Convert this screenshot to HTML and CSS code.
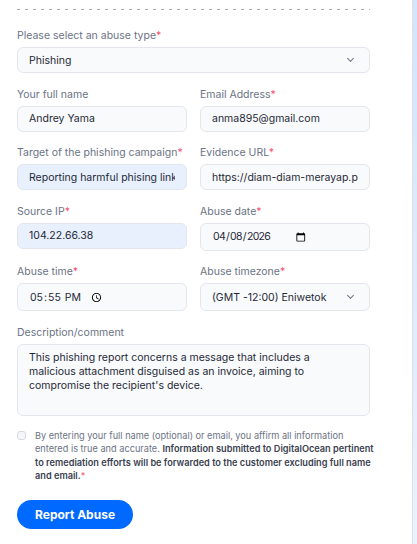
FILE: index.html
```html
<!DOCTYPE html>
<html lang="en">
<head>
  <meta charset="UTF-8" />
  <meta name="viewport" content="width=device-width, initial-scale=1.0"/>
  <title>Report Abuse</title>
  <link rel="stylesheet" href="styles.css">
</head>
<body>
  <div class="page">
    <form class="abuse-form" onsubmit="return false">
      <div class="divider"></div>

      <div class="field">
        <label>Please select an abuse type<span class="req">*</span></label>
        <div class="select-wrap">
          <select class="control">
            <option>Phishing</option>
            <option>Spam</option>
            <option>Malware</option>
          </select>
        </div>
      </div>

      <div class="row">
        <div class="field">
          <label>Your full name</label>
          <input class="control" type="text" value="Andrey Yama">
        </div>
        <div class="field">
          <label>Email Address<span class="req">*</span></label>
          <input class="control" type="email" value="anma895@gmail.com">
        </div>
      </div>

      <div class="row">
        <div class="field">
          <label>Target of the phishing campaign<span class="req">*</span></label>
          <input class="control filled" type="text" value="Reporting harmful phising link">
        </div>
        <div class="field">
          <label>Evidence URL<span class="req">*</span></label>
          <input class="control" type="text" value="https://diam-diam-merayap.pages.dev">
        </div>
      </div>

      <div class="row">
        <div class="field">
          <label>Source IP<span class="req">*</span></label>
          <input class="control filled" type="text" value="104.22.66.38">
        </div>
        <div class="field">
          <label>Abuse date<span class="req">*</span></label>
          <input class="control tall date" type="date" value="2026-04-08">
        </div>
      </div>

      <div class="row">
        <div class="field">
          <label>Abuse time<span class="req">*</span></label>
          <input class="control tall" type="time" value="17:55">
        </div>
        <div class="field">
          <label>Abuse timezone<span class="req">*</span></label>
          <div class="select-wrap">
            <select class="control tall">
              <option>(GMT -12:00) Eniwetok</option>
              <option>(GMT -11:00) Midway Island</option>
            </select>
          </div>
        </div>
      </div>

      <div class="field">
        <label>Description/comment</label>
        <textarea class="control area">This phishing report concerns a message that includes a malicious attachment disguised as an invoice, aiming to compromise the recipient's device.</textarea>
      </div>

      <label class="consent">
        <input type="checkbox">
        <span>By entering your full name (optional) or email, you affirm all information entered is true and accurate. <strong>Information submitted to DigitalOcean pertinent to remediation efforts will be forwarded to the customer excluding full name and email.</strong><span class="req">*</span></span>
      </label>

      <button class="submit-btn" type="submit">Report Abuse</button>
    </form>
    <div class="side"></div>
  </div>
</body>
</html>
```

FILE: styles.css
```css
body {
  margin: 0;
  font-family: Inter, 'Noto Sans', sans-serif;
  background: #fff;
  color: #1f2937;
}
.page {
  display: flex;
  height: 544px;
  overflow: hidden;
}
.abuse-form {
  width: 353px;
  padding: 9px 0 0 17px;
  margin-right: 42px;
}
.side {
  flex: 1;
  border-left: 1px solid #dcdfe4;
  background: linear-gradient(to bottom, #d3e4fb, #eaf2fd);
}
.divider {
  height: 1px;
  background: repeating-linear-gradient(90deg, #a3a8b1 0 3px, transparent 3px 8px);
  margin-bottom: 17px;
}
.row {
  display: grid;
  grid-template-columns: 1fr 1fr;
  gap: 13px;
}
.field {
  margin-bottom: 12.6px;
}
.field label {
  display: block;
  font-size: 10.5px;
  line-height: 18px;
  color: #6b7384;
  margin-bottom: 2px;
  white-space: nowrap;
}
.req {
  color: #f0506e;
}
.control {
  display: block;
  box-sizing: border-box;
  width: 100%;
  height: 26px;
  padding: 0 11px;
  font-family: inherit;
  font-size: 10.5px;
  color: #1f2937;
  background: #f9fafc;
  border: 1px solid #e3e6ec;
  border-radius: 6px;
  outline: none;
}
.control.tall {
  height: 28px;
}
.control.filled {
  background: #e8f0fe;
}
.control.date {
  letter-spacing: -0.7px;
}
/* keep the picker icon right after the date/time text */
.control::-webkit-datetime-edit {
  flex: none;
}
.control::-webkit-calendar-picker-indicator {
  margin-left: 8px;
  padding: 0;
}
.select-wrap {
  position: relative;
}
.select-wrap select {
  appearance: none;
  -webkit-appearance: none;
}
.select-wrap::after {
  content: "";
  position: absolute;
  right: 17px;
  top: 50%;
  width: 4px;
  height: 4px;
  margin-top: -4px;
  border-right: 1.3px solid #6b7384;
  border-bottom: 1.3px solid #6b7384;
  transform: rotate(45deg);
}
.control.area {
  height: 72px;
  padding: 6px 11px;
  line-height: 14px;
  resize: none;
}
.consent {
  display: flex;
  gap: 9px;
  font-size: 9.2px;
  line-height: 13.6px;
  color: #6b7384;
  margin: 1px -8px 0 0;
}
.consent input {
  flex: none;
  width: 9px;
  height: 9px;
  margin: 2px 0 0;
  appearance: none;
  -webkit-appearance: none;
  border: 1px solid #d5dae3;
  border-radius: 3px;
  background: #f4f6fa;
}
.consent strong {
  font-weight: 600;
  color: #3b4150;
}
.submit-btn {
  margin-top: 17px;
  height: 29px;
  padding: 0 18px;
  border: none;
  border-radius: 15px;
  background: #0069ff;
  color: #fff;
  font-family: inherit;
  font-size: 12px;
  font-weight: 700;
  cursor: pointer;
}
```
